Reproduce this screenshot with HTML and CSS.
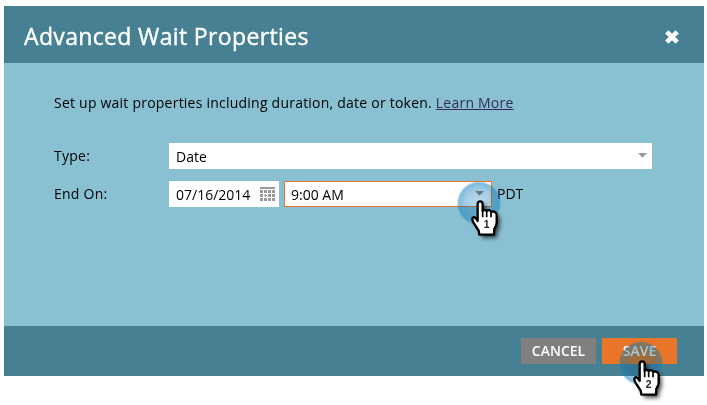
FILE: index.html
```html
<!DOCTYPE html>
<html lang="en">
<head>
<meta charset="utf-8">
<title>Advanced Wait Properties</title>
<link rel="stylesheet" href="styles.css">
</head>
<body>
<svg width="0" height="0" class="defs">
  <defs>
    <radialGradient id="halo">
      <stop offset="0" stop-color="#a5c6de"/>
      <stop offset=".7" stop-color="#96c3de"/>
      <stop offset=".9" stop-color="#92c4e0"/>
      <stop offset="1" stop-color="#92c4e0" stop-opacity="0"/>
    </radialGradient>
    <radialGradient id="rim">
      <stop offset="0" stop-color="#2b92cc" stop-opacity=".08"/>
      <stop offset=".6" stop-color="#2b92cc" stop-opacity=".2"/>
      <stop offset=".9" stop-color="#2b92cc" stop-opacity=".42"/>
      <stop offset="1" stop-color="#2b92cc" stop-opacity="0"/>
    </radialGradient>
    <filter id="soft" x="-50%" y="-50%" width="200%" height="200%"><feGaussianBlur stdDeviation="6"/></filter>
    <path id="hand" d="M80 125 V81 Q80 73 87.500 73 Q95 73 95 81 V102 Q101 95 107 102 Q114 96 120 104 Q135 101 137 113 V137 Q137 146 130 155 L129 173 H85 L83 161 L67 136 Q61 124 67 121 Q73 119 80 132 Z"/>
  </defs>
</svg>
<main class="dialog">
  <header class="header">
    <h1 class="title">Advanced Wait Properties</h1>
    <svg class="close" width="16" height="16" viewBox="0 0 16 16"><path d="M2.800 2.800 13.200 13.200M13.200 2.800 2.800 13.200"/></svg>
  </header>
  <section class="body">
    <p class="intro">Set up wait properties including duration, date or token. <a class="link">Learn More</a></p>
    <div class="row">
      <span class="label">Type:</span>
      <div class="field type"><span>Date</span><svg class="arrow" width="9" height="5" viewBox="0 0 9 5"><path d="M0 0h9L4.500 4.800z"/></svg></div>
    </div>
    <div class="row">
      <span class="label">End On:</span>
      <div class="field date"><span>07/16/2014</span>
        <svg class="calendar" width="15" height="14" viewBox="0 0 15 14" shape-rendering="crispEdges"><path d="M0 0h15v2H0zM0 3h3v3H0zM4 3h3v3H4zM8 3h3v3H8zM12 3h3v3h-3zM0 7h3v3H0zM5 7h1v1h1v1H6v1H5V9H4V8h1zM8 7h3v3H8zM12 7h3v3h-3zM0 11h3v3H0zM4 11h3v3H4zM8 11h3v3H8zM12 11h3v3h-3z"/></svg>
      </div>
      <div class="field time"><span>9:00 AM</span><svg class="arrow dark" width="9" height="5" viewBox="0 0 9 5"><path d="M0 0h9L4.500 4.800z"/></svg></div>
      <span class="zone">PDT</span>
    </div>
  </section>
  <footer class="footer">
    <button class="button cancel">CANCEL</button>
    <button class="button save">SAVE</button>
  </footer>
  <svg class="pointer first" width="60" height="65" viewBox="0 0 180 195">
    <circle class="halo" cx="84" cy="79" r="67" fill="url(#halo)"/>
    <circle cx="84" cy="79" r="67" fill="url(#rim)"/>
    <use href="#hand" class="shadow" transform="translate(9 9)"/>
    <use href="#hand" class="hand"/>
    <path class="fingers" d="M95 98V121M107 101V121M120 103V121"/>
    <text x="107" y="153">1</text>
  </svg>
  <svg class="pointer second" width="60" height="65" viewBox="0 0 180 195">
    <circle class="halo" cx="84" cy="79" r="67" fill="url(#halo)"/>
    <circle cx="84" cy="79" r="67" fill="url(#rim)"/>
    <use href="#hand" class="shadow" transform="translate(9 9)"/>
    <use href="#hand" class="hand"/>
    <path class="fingers" d="M95 98V121M107 101V121M120 103V121"/>
    <text x="107" y="153">2</text>
  </svg>
</main>
</body>
</html>
```
FILE: styles.css
```css
* { box-sizing: border-box; }
html { background: #fff; }
body { margin: 0; min-height: 405px; padding: 6px 0 0 4px; font: 14px/20px "Open Sans", sans-serif; color: #000; }
.defs { position: absolute; }
.dialog { position: relative; width: 700px; height: 370px; display: flex; flex-direction: column; background: #89c1d2; }
.header { height: 57px; padding: 3px 28px 0 20px; display: flex; align-items: center; justify-content: space-between; background: #468092; }
.title { margin: 0; font-size: 23px; line-height: 32px; font-weight: 400; letter-spacing: .35px; color: #fff; -webkit-text-stroke: .4px #fff; }
.close { margin-top: 2px; margin-right: -4px; stroke: #fff; stroke-width: 4.6; }
.body { flex: 1; padding: 30px 52px 0 50px; }
.intro { margin: 0 0 30px; letter-spacing: .225px; }
.link { color: #342a5a; text-decoration: underline; }
.row { display: flex; height: 26px; margin-bottom: 12px; }
.label { width: 115px; line-height: 25px; letter-spacing: .25px; }
.field { display: flex; align-items: center; justify-content: space-between; height: 26px; padding: 1px 5px 0 7px; background: #fff; }
.type { width: 483px; }
.date { width: 110px; padding-right: 4px; }
.calendar { fill: #999; margin-top: -2px; }
.time { width: 208px; margin-left: 5px; padding: 2px 7px 0 6px; border: 1px solid #e97628; }
.arrow { margin-top: -3px; fill: #999; }
.dark { fill: #888; }
.zone { margin-left: 5px; line-height: 25px; }
.footer { height: 50px; padding: 12px 27px; display: flex; justify-content: flex-end; gap: 6px; background: #468092; }
.button { width: 75px; height: 26px; padding: 0; border: 0; color: #fff; font: 600 14px/26px "Open Sans", sans-serif; }
.cancel { background: #808080; }
.save { background: #e97628; }
.pointer { position: absolute; overflow: visible; }
.first { left: 447px; top: 171px; }
.second { left: 609px; top: 331px; }
.halo { mix-blend-mode: multiply; opacity: .6; }
.shadow { fill: #000; opacity: .7; filter: url(#soft); }
.hand { fill: #fff; stroke: #000; stroke-width: 7; stroke-linejoin: round; }
.fingers { fill: none; stroke: #000; stroke-width: 5; }
.pointer text { font: 700 31px "Liberation Sans", sans-serif; text-anchor: middle; fill: #222; }
```
